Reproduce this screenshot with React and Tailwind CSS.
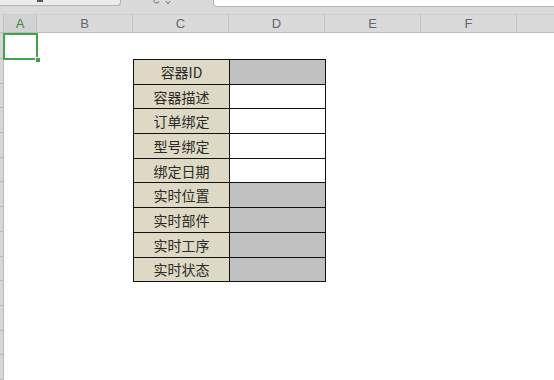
import React from 'react'

const COLS = [
  { key: 'A', w: 'w-[33px]' },
  { key: 'B', w: 'w-[96px]' },
  { key: 'C', w: 'w-[96px]' },
  { key: 'D', w: 'w-[96px]' },
  { key: 'E', w: 'w-[96px]' },
  { key: 'F', w: 'w-[96px]' },
  { key: '', w: 'w-[40px]' },
]

const FIELDS = [
  { label: '容器ID', gray: true },
  { label: '容器描述', gray: false },
  { label: '订单绑定', gray: false },
  { label: '型号绑定', gray: false },
  { label: '绑定日期', gray: false },
  { label: '实时位置', gray: true },
  { label: '实时部件', gray: true },
  { label: '实时工序', gray: true },
  { label: '实时状态', gray: true },
]

const ROWS = Array.from({ length: 14 })

export default function App() {
  return (
    <div className="w-[554px] h-[380px] overflow-hidden bg-white flex flex-col font-['Liberation_Sans','Noto_Sans_CJK_SC',sans-serif]">
      {/* tab strip */}
      <div className="h-[14px] shrink-0 bg-[#dadada] flex items-start">
        <div className="w-[121px] h-[6px] bg-[#ececec] border-r border-b border-[#b4b4b4] rounded-br-[4px] flex justify-center">
          <div className="w-[6px] h-[2px] bg-[#555] ml-[-40px]" />
        </div>
        <div className="w-[92px] h-[6px] flex justify-center items-start">
          <svg width="22" height="5" viewBox="0 0 22 5" className="ml-[-8px]">
            <path d="M2 0 A2.5 2.5 0 1 0 7 1" fill="none" stroke="#777" strokeWidth="1" />
            <path d="M14 1 L16 4 L18 1" fill="none" stroke="#777" strokeWidth="1" />
          </svg>
        </div>
        <div className="flex-1 h-[7px] bg-white border-l border-b border-[#b4b4b4] rounded-bl-[4px]" />
      </div>

      {/* column headers */}
      <div className="h-[19px] shrink-0 flex bg-[#dadada] border-t border-[#cfcfcf] border-b border-b-[#bdbdbd]">
        <div className="w-[4px] shrink-0 border-r border-[#c4c4c4]" />
        {COLS.map((c) => (
          <div
            key={c.key || 'x'}
            className={`${c.w} shrink-0 flex items-center justify-center text-[13px] border-r border-[#c4c4c4] ${
              c.key === 'A' ? 'bg-[#d2d2d2] text-[#3a8a3a]' : 'text-[#666]'
            }`}
          >
            {c.key}
          </div>
        ))}
      </div>

      {/* body */}
      <div className="flex flex-1 min-h-0">
        <div className="w-[4px] shrink-0 bg-[#d6d6d6] border-r border-[#bdbdbd] flex flex-col">
          <div className="h-[26px] shrink-0 border-b border-[#bcbcbc]" />
          {ROWS.map((_, i) => (
            <div key={i} className="h-[24.7px] shrink-0 border-b border-[#bcbcbc]" />
          ))}
        </div>

        <div className="flex-1 flex flex-col">
          <div className="h-[26px] shrink-0 relative">
            <div className="absolute left-[-1px] top-0 w-[35px] h-[27px] border-[2.5px] border-[#3fa548]" />
            <div className="absolute left-[31px] top-[24px] w-[6px] h-[6px] bg-[#3fa548] border border-white" />
          </div>

          <div className="ml-[129px]">
            <table className="border-collapse">
              <tbody>
                {FIELDS.map((f) => (
                  <tr key={f.label} className="h-[24.7px]">
                    <td className="w-[96px] p-0 border border-[#111] bg-[#ddd9c4] text-center text-[14px] leading-none text-[#2a2a2a] font-['Noto_Sans_CJK_SC',sans-serif]">
                      {f.label}
                    </td>
                    <td className={`w-[96px] p-0 border border-[#111] ${f.gray ? 'bg-[#c0c0c0]' : 'bg-white'}`} />
                  </tr>
                ))}
              </tbody>
            </table>
          </div>
        </div>
      </div>
    </div>
  )
}
